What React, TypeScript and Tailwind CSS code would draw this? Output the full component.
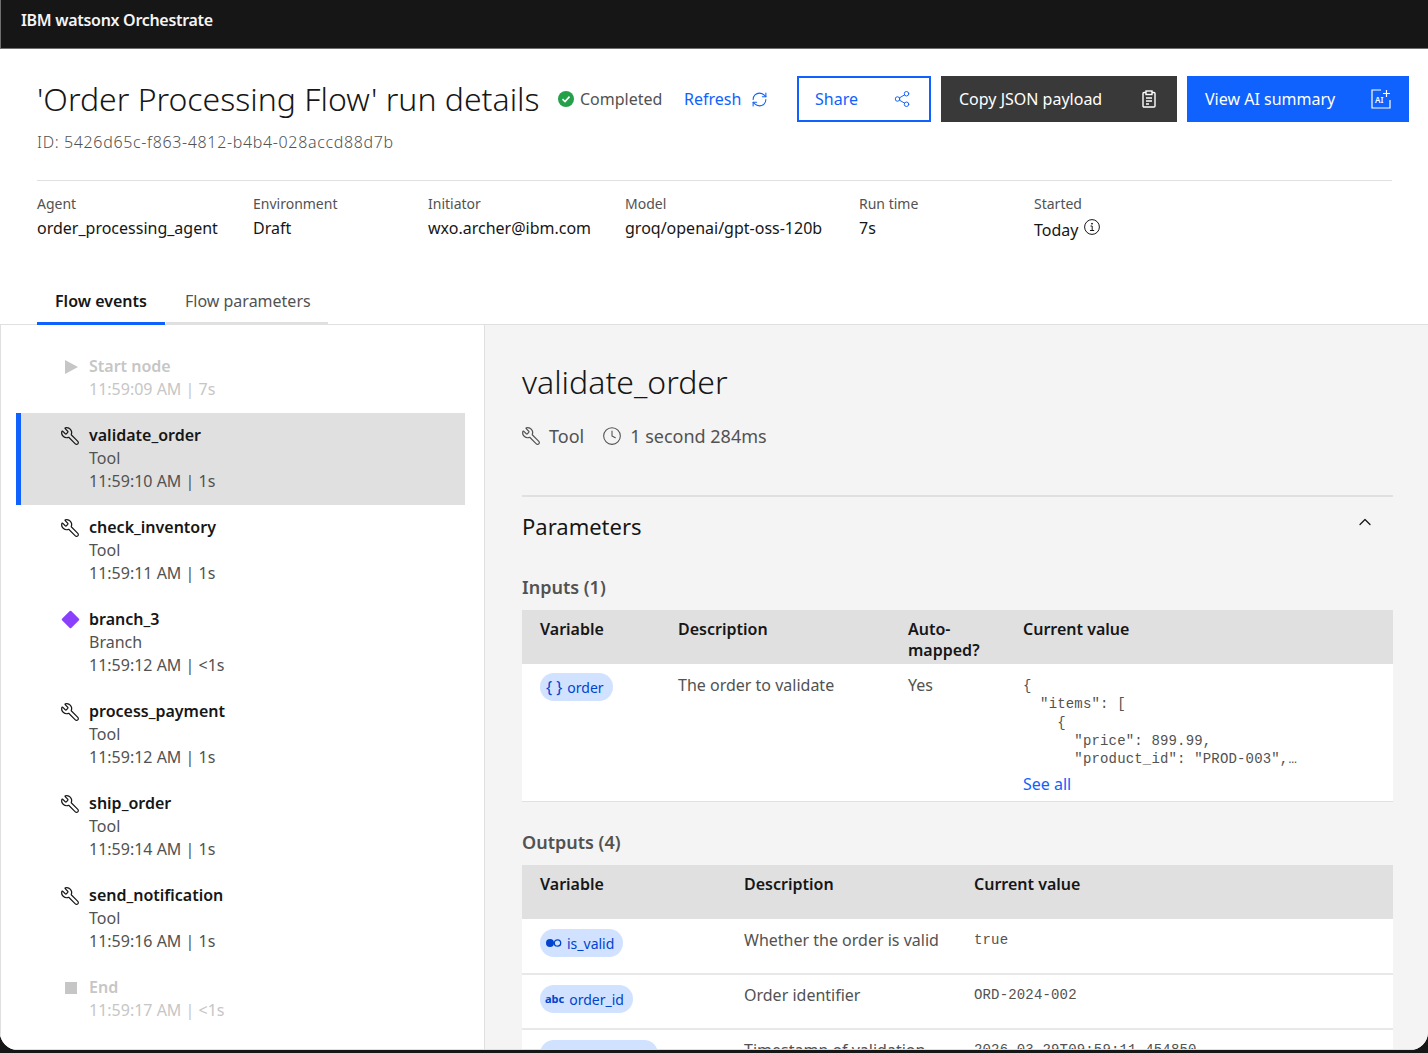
import { ChevronUp, Clock, RefreshCw, Share2, Wrench } from "lucide-react";
import type { ReactNode } from "react";

const sans = "font-['Noto_Sans',sans-serif]";
const mono = "font-['Liberation_Mono',monospace] text-[14px] tracking-[0.16px]";

const ToolIcon = ({ className }: { className: string }) => (
  <Wrench size={20} strokeWidth={1.4} className={`-scale-x-100 ${className}`} />
);

const meta = [
  { label: "Agent", value: "order_processing_agent", width: "w-[216px]" },
  { label: "Environment", value: "Draft", width: "w-[175px]" },
  { label: "Initiator", value: "wxo.archer@ibm.com", width: "w-[197px]" },
  { label: "Model", value: "groq/openai/gpt-oss-120b", width: "w-[234px]" },
  { label: "Run time", value: "7s", width: "w-[175px]" },
];

const events = [
  { name: "validate_order", type: "Tool", time: "11:59:10 AM | 1s", active: true },
  { name: "check_inventory", type: "Tool", time: "11:59:11 AM | 1s" },
  { name: "branch_3", type: "Branch", time: "11:59:12 AM | <1s", branch: true },
  { name: "process_payment", type: "Tool", time: "11:59:12 AM | 1s" },
  { name: "ship_order", type: "Tool", time: "11:59:14 AM | 1s" },
  { name: "send_notification", type: "Tool", time: "11:59:16 AM | 1s" },
];

const json = `{
  "items": [
    {
      "price": 899.99,
      "product_id": "PROD-003",…`;

const Pill = ({ icon, children }: { icon: ReactNode; children: ReactNode }) => (
  <span className="-mt-px inline-flex h-[28px] items-center gap-[5px] rounded-full bg-[#d0e2ff] pl-[5px] pr-[9px] text-[14px] text-[#0043ce]">
    {icon}
    {children}
  </span>
);

const BoolIcon = () => (
  <svg width="17" height="10" viewBox="0 0 17 10">
    <circle cx="5" cy="5" r="4" fill="#0043ce" />
    <circle cx="12.5" cy="5" r="3.2" fill="none" stroke="#0043ce" strokeWidth="1.3" />
  </svg>
);

const DisabledEvent = ({ icon, name, time }: { icon: ReactNode; name: string; time: string }) => (
  <div className="flex pl-[61px] leading-[23px] text-[#c6c6c6]">
    <div className="flex h-[23px] w-[27px] items-center">{icon}</div>
    <div>
      <div className="font-semibold">{name}</div>
      <div>{time}</div>
    </div>
  </div>
);

export default function App() {
  return (
    <div className={`h-[1053px] w-[1428px] overflow-hidden bg-[#161616] ${sans}`}>
      <div className="flex h-[1050px] flex-col overflow-hidden rounded-b-[18px] bg-white">
        <div className="flex h-[49px] shrink-0 items-start border-b border-l border-[#6f6f6f] bg-[#161616] pl-[20px] pt-[10px] text-[16px] font-semibold leading-[21px] tracking-[-0.3px] text-[#f4f4f4]">
          IBM watsonx Orchestrate
        </div>

        <div className="shrink-0 pl-[37px] pr-[19px] pt-[27px]">
          <div className="flex h-[46px] items-center">
            <h1 className="w-[521px] text-[32px] font-light leading-[46px] text-[#161616]">
              'Order Processing Flow' run details
            </h1>
            <svg width="16" height="16" viewBox="0 0 16 16" className="shrink-0">
              <circle cx="8" cy="8" r="8" fill="#24a148" />
              <path d="M4.5 8.2 7 10.6l4.5-5" fill="none" stroke="white" strokeWidth="1.6" />
            </svg>
            <span className="ml-[6px] w-[104px] text-[16px] text-[#525252]">Completed</span>
            <span className="w-[67px] text-[16px] text-[#0f62fe]">Refresh</span>
            <RefreshCw size={17} strokeWidth={1.5} className="text-[#0f62fe]" />
            <button className="ml-[29px] flex h-[46px] w-[134px] items-center justify-between border-2 border-[#0f62fe] pl-[16px] pr-[18px] text-[16px] text-[#0f62fe]">
              Share
              <Share2 size={18} strokeWidth={1.3} />
            </button>
            <button className="ml-[10px] flex h-[46px] w-[236px] items-center justify-between bg-[#393939] pl-[18px] pr-[20px] text-[16px] text-white">
              Copy JSON payload
              <svg width="16" height="18" viewBox="0 0 16 18" fill="none" stroke="white" strokeWidth="1.4">
                <rect x="2" y="2.5" width="12" height="14.5" rx="1" />
                <rect x="5" y="1" width="6" height="3.5" fill="#393939" />
                <path d="M5 8h6M5 11h6M5 14h3" />
              </svg>
            </button>
            <button className="ml-[10px] flex h-[46px] w-[222px] items-center justify-between bg-[#0f62fe] pl-[18px] pr-[18px] text-[16px] text-white">
              View AI summary
              <svg width="20" height="20" viewBox="0 0 20 20" fill="none" stroke="white" strokeWidth="1.2">
                <path d="M10 1H1v18h18v-8M15.500 1v7M12 4.500h7" />
                <text x="4" y="14" fontSize="8" fontWeight="600" fill="white" stroke="none">AI</text>
              </svg>
            </button>
          </div>
          <div className="mt-[10px] text-[16px] font-light leading-[21px] tracking-[0.65px] text-[#525252]">
            ID: 5426d65c-f863-4812-b4b4-028accd88d7b
          </div>
          <div className="mr-[17px] mt-[27px] h-px bg-[#e0e0e0]" />
          <div className="mt-[13px] flex">
            {meta.map((m) => (
              <div key={m.label} className={m.width}>
                <div className="text-[14px] leading-[19px] text-[#525252]">{m.label}</div>
                <div className="mt-[3px] text-[16px] leading-[24px] text-[#161616]">{m.value}</div>
              </div>
            ))}
            <div>
              <div className="text-[14px] leading-[19px] text-[#525252]">Started</div>
              <div className="mt-[5px] flex items-center gap-[6px] text-[16px] leading-[24px] text-[#161616]">
                Today
                <svg width="16" height="16" viewBox="0 0 16 16" fill="none" stroke="#161616" strokeWidth="1" className="-mt-[7px]">
                  <circle cx="8" cy="8" r="7.400" />
                  <path d="M6.500 7h1.700v4.500M6 11.500h4.200" />
                  <circle cx="8" cy="4.700" r=".5" fill="#161616" />
                </svg>
              </div>
            </div>
          </div>
        </div>

        <div className="mt-[49px] flex h-[34px] shrink-0 border-b border-[#e0e0e0] pl-[37px] text-[16px]">
          <div className="h-[34px] w-[128px] border-b-[3px] border-[#0f62fe] pl-[18px] font-semibold leading-[21px] text-[#161616]">
            Flow events
          </div>
          <div className="ml-px h-[34px] w-[162px] border-b-[3px] border-[#e0e0e0] pl-[19px] leading-[21px] text-[#525252]">
            Flow parameters
          </div>
        </div>

        <div className="flex min-h-0 flex-1 text-[16px]">
          <div className="w-[485px] shrink-0 border-l border-r border-[#e0e0e0] bg-white pt-[30px]">
            <DisabledEvent
              name="Start node"
              time="11:59:09 AM | 7s"
              icon={
                <svg width="13" height="14" viewBox="0 0 13 14" className="ml-[3px]">
                  <path d="M0 0l13 7-13 7z" fill="#c6c6c6" />
                </svg>
              }
            />
            <div className="mb-[11px] mt-[12px]">
              {events.map((e) => (
                <div
                  key={e.name}
                  className={`ml-[15px] flex h-[92px] w-[449px] pt-[11px] leading-[23px] ${
                    e.active ? "border-l-[5px] border-[#0f62fe] bg-[#e0e0e0] pl-[41px]" : "pl-[46px]"
                  }`}
                >
                  <div className="-ml-[2px] flex h-[23px] w-[29px] items-center">
                    {e.branch ? (
                      <div className="ml-[4px] h-[13px] w-[13px] rotate-45 rounded-[1px] bg-[#8a3ffc]" />
                    ) : (
                      <ToolIcon className="text-[#161616]" />
                    )}
                  </div>
                  <div>
                    <div className="font-semibold text-[#161616]">{e.name}</div>
                    <div className="text-[#525252]">{e.type}</div>
                    <div className="text-[#525252]">{e.time}</div>
                  </div>
                </div>
              ))}
            </div>
            <DisabledEvent
              name="End"
              time="11:59:17 AM | <1s"
              icon={<div className="ml-[3px] h-[12px] w-[12px] bg-[#c6c6c6]" />}
            />
          </div>

          <div className="min-w-0 flex-1 overflow-hidden bg-[#f4f4f4] pl-[37px] pr-[35px] pt-[35px]">
            <h2 className="text-[32px] font-light leading-[44px] text-[#161616]">validate_order</h2>
            <div className="mt-[20px] flex h-[24px] items-center text-[18px] text-[#525252]">
              <ToolIcon className="-ml-px text-[#525252]" />
              <span className="ml-[8px]">Tool</span>
              <Clock size={20} strokeWidth={1.3} className="ml-[18px]" />
              <span className="ml-[8px]">1 second 284ms</span>
            </div>
            <div className="mt-[47px] h-[2px] bg-[#e0e0e0]" />
            <div className="relative mt-[13px] text-[22px] leading-[32px] text-[#161616]">
              Parameters
              <ChevronUp size={20} strokeWidth={1.5} className="absolute right-[18px] top-[2px]" />
            </div>
            <div className="mt-[33px] text-[18px] font-semibold leading-[24px] text-[#525252]">Inputs (1)</div>

            <div className="mt-[11px] grid h-[54px] grid-cols-[138px_230px_115px_1fr] bg-[#e0e0e0] pl-[18px] pt-[9px] font-semibold leading-[21px] text-[#161616]">
              <div>Variable</div>
              <div>Description</div>
              <div>
                Auto-
                <br />
                mapped?
              </div>
              <div>Current value</div>
            </div>
            <div className="grid h-[138px] grid-cols-[138px_230px_115px_1fr] border-b border-[#e0e0e0] bg-white pl-[18px] pt-[10px] text-[#525252]">
              <div>
                <Pill icon={<span className="ml-[1px] text-[16px]">{"{ }"}</span>}>order</Pill>
              </div>
              <div className="leading-[22px]">The order to validate</div>
              <div className="leading-[22px]">Yes</div>
              <div>
                <pre className={`${mono} mt-[3px] leading-[18.25px]`}>{json}</pre>
                <div className="mt-[5px] leading-[22px] text-[#0f62fe]">See all</div>
              </div>
            </div>

            <div className="mt-[28px] text-[18px] font-semibold leading-[24px] text-[#525252]">Outputs (4)</div>
            <div className="mt-[11px] grid h-[54px] grid-cols-[204px_230px_1fr] bg-[#e0e0e0] pl-[18px] pt-[9px] font-semibold leading-[21px] text-[#161616]">
              <div>Variable</div>
              <div>Description</div>
              <div>Current value</div>
            </div>
            <div className="grid h-[56px] grid-cols-[204px_230px_1fr] border-b-2 border-[#e8e8e8] bg-white pl-[18px] pt-[11px] text-[#525252]">
              <div>
                <Pill icon={<BoolIcon />}>is_valid</Pill>
              </div>
              <div className="leading-[20px]">Whether the order is valid</div>
              <div className={`${mono} leading-[20px]`}>true</div>
            </div>
            <div className="grid h-[55px] grid-cols-[204px_230px_1fr] border-b-2 border-[#e8e8e8] bg-white pl-[18px] pt-[10px] text-[#525252]">
              <div>
                <Pill icon={<span className="text-[11px] font-bold">abc</span>}>order_id</Pill>
              </div>
              <div className="leading-[20px]">Order identifier</div>
              <div className={`${mono} leading-[20px]`}>ORD-2024-002</div>
            </div>
            <div className="grid h-[55px] grid-cols-[204px_230px_1fr] bg-white pl-[18px] pt-[10px] text-[#525252]">
              <div>
                <Pill icon={<span className="text-[11px] font-bold">abc</span>}>validated_at</Pill>
              </div>
              <div className="leading-[20px]">Timestamp of validation</div>
              <div className={`${mono} leading-[20px]`}>2026-03-29T09:59:11.454850</div>
            </div>
          </div>
        </div>
        <div className="h-px shrink-0 bg-[#e0e0e0]" />
      </div>
    </div>
  );
}
